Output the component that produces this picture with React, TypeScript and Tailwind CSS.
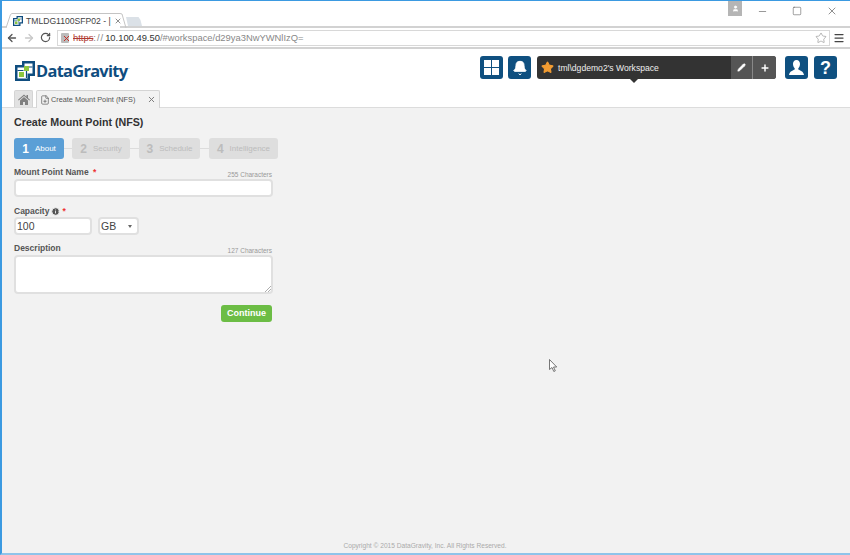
import { ArrowLeft, ArrowRight, RotateCw, Star, X, Minus, Square, Menu, Pencil, Plus, FilePlus, Info, User, Bell } from "lucide-react";

function LogoMark({ size }: { size: number }) {
  return (
    <svg width={size} height={size} viewBox="0 0 20 20" className="shrink-0">
      <path d="M0 4h7V0h13v15h-5v5H0z" fill="#0f4d7f" />
      <path d="M2.500 6.500h7v-4h8v10h-5v5h-10z" fill="#fff" />
      <rect x="9" y="5" width="5" height="5" fill="#8cc63f" />
      <rect x="4" y="11" width="5" height="5" fill="#8cc63f" />
      <path d="M2.500 9.500h6M11.500 10v7M14 6h3.500" stroke="#0f4d7f" strokeWidth="1.200" fill="none" />
    </svg>
  );
}

function HeaderButton({ children }: { children: React.ReactNode }) {
  return (
    <div className="flex h-[23px] w-[23px] items-center justify-center rounded-[3px] bg-[#0f5080] text-white">
      {children}
    </div>
  );
}

function Step({ n, label, active, width }: { n: number; label: string; active?: boolean; width: string }) {
  return (
    <div
      className={`flex h-[21px] items-center justify-center gap-[6px] rounded-[3px] ${width} ${
        active ? "bg-[#5b9fd6] text-white" : "bg-[#dedede] text-[#bcbcbc]"
      }`}
    >
      <span className="text-[12px] font-bold leading-none">{n}</span>
      <span className="text-[8px] leading-none">{label}</span>
    </div>
  );
}

const fieldBox = "rounded-[4px] border-2 border-[#e0e0e0] bg-white";

export default function App() {
  return (
    <div className="flex h-[555px] w-[850px] flex-col overflow-hidden border-t border-l-[2px] border-b-[2px] border-t-[#3b9ae1] border-l-[#3b9ae1] border-b-[#8fc4ea] bg-white font-['Liberation_Sans',sans-serif] text-[#333]">
      {/* browser title strip */}
      <div className="relative flex h-[27px] shrink-0 items-end border-b-2 border-[#d2d2d2] pl-[4px]">
        <svg width="6" height="15" viewBox="0 0 6 15" className="mb-[-2px] shrink-0">
          <path d="M0 15L5 1.500 6 1v14z" fill="#fff" />
          <path d="M0 15L4.500 1.500 6 .5" fill="none" stroke="#c4c4c4" />
        </svg>
        <div className="relative z-10 mb-[-2px] flex h-[15px] w-[108px] items-center gap-[3px] border-t border-[#c4c4c4] bg-white pl-[1px] pr-[5px]">
          <LogoMark size={10} />
          <span className="flex-1 whitespace-nowrap text-[8.6px] leading-none text-[#444]">TMLDG1100SFP02 - |</span>
          <X size={8} strokeWidth={2} className="shrink-0 text-[#555]" />
        </div>
        <svg width="24" height="15" viewBox="0 0 24 15" className="mb-[-2px] shrink-0">
          <path d="M6 4l2 9h14l-1.500-6-2-3z" fill="#dbe1e7" />
          <path d="M0 .5L2 1l4 14" fill="#fff" stroke="#c4c4c4" />
        </svg>
        <div className="ml-auto flex h-[26px] items-start self-start">
          <div className="mr-[15px] flex h-[15px] w-[14px] items-center justify-center bg-[#b5b5b5]">
            <User size={7} fill="#fff" stroke="#fff" />
          </div>
          <div className="mt-[4px] flex items-center gap-[24px] pr-[12px] text-[#444]">
            <Minus size={11} strokeWidth={1.2} />
            <Square size={10} strokeWidth={1.2} />
            <X size={12} strokeWidth={1.2} />
          </div>
        </div>
      </div>

      {/* browser toolbar */}
      <div className="flex h-[21px] shrink-0 items-center border-b-2 border-[#d2d2d2] bg-white pl-[4px] pr-[5px]">
        <ArrowLeft size={12} strokeWidth={2.6} className="text-[#555]" />
        <ArrowRight size={12} strokeWidth={2.6} className="ml-[5px] text-[#c8c8c8]" />
        <RotateCw size={11} strokeWidth={2.6} className="ml-[5px] text-[#555]" />
        <div className="ml-[6px] flex h-[16px] flex-1 items-center border border-[#d8d8d8] pl-[3px] pr-[2px] text-[9.4px] leading-none">
          <div className="relative h-[10px] w-[8px] shrink-0 rounded-[1px] bg-[#bbb]">
            <X size={9} strokeWidth={2.5} className="absolute left-[1px] top-[1px] text-[#c8281e]" />
          </div>
          <span className="ml-[4px] text-[#b03a32] line-through">https</span>
          <span className="tracking-[1px] text-[#888]">://</span>
          <span className="ml-[1px] text-[#333]">10.100.49.50</span>
          <span className="text-[#888]">/#workspace/d29ya3NwYWNlIzQ=</span>
          <Star size={12} strokeWidth={1.2} className="ml-auto text-[#888]" />
        </div>
        <Menu size={12} strokeWidth={2.5} className="ml-[3px] text-[#444]" />
      </div>

      {/* app header */}
      <div className="flex h-[59px] shrink-0 flex-col border-b border-[#dcdcdc] bg-white">
        <div className="flex items-start pl-[13px] pr-[13px] pt-[7px]">
          <div className="mt-[5px] flex items-center gap-[1px]">
            <LogoMark size={20} />
            <span className="font-['Open_Sans',sans-serif] text-[16.4px] font-bold leading-none tracking-[-0.7px] text-[#0f4d7f]">DataGravity</span>
            <span className="mt-[-8px] text-[5px] leading-none text-[#0f4d7f]">.</span>
          </div>
          <div className="ml-auto flex items-center">
            <HeaderButton>
              <div className="grid h-[15px] w-[15px] grid-cols-2 gap-[1.5px]">
                <span className="bg-white" />
                <span className="bg-white" />
                <span className="bg-white" />
                <span className="bg-white" />
              </div>
            </HeaderButton>
            <div className="ml-[5px]">
              <HeaderButton>
                <Bell size={16} fill="#fff" strokeWidth={1.5} />
              </HeaderButton>
            </div>
            <div className="relative ml-[6px] flex h-[23px] w-[239px] items-center rounded-[3px] bg-[#333] text-white">
              <Star size={13} fill="#f39c32" stroke="#f39c32" className="ml-[4px]" />
              <span className="ml-[4px] mt-[1px] flex-1 text-[8.6px] leading-none text-[#eee]">tml\dgdemo2's Workspace</span>
              <div className="flex h-full w-[22px] items-center justify-center border-r border-[#888] bg-[#555]">
                <Pencil size={9} fill="#fff" strokeWidth={1.5} />
              </div>
              <div className="flex h-full w-[23px] items-center justify-center rounded-r-[3px] bg-[#555]">
                <Plus size={10} strokeWidth={3.5} />
              </div>
              <div className="absolute left-[93px] top-[23px] h-0 w-0 border-x-[4px] border-t-[4px] border-x-transparent border-t-[#333]" />
            </div>
            <div className="ml-[9px]">
              <HeaderButton>
                <svg width="17" height="17" viewBox="0 0 17 17" fill="#fff">
                  <path d="M8.500 1C6.200 1 5 2.700 5 5c0 1.900.8 3.400 1.700 4.300v1.200C5 11.500 1.500 12.200 1 16h15c-.5-3.800-4-4.500-5.700-5.500V9.300C11.200 8.400 12 6.900 12 5c0-2.300-1.200-4-3.500-4z" />
                </svg>
              </HeaderButton>
            </div>
            <div className="ml-[6px]">
              <HeaderButton>
                <span className="text-[18px] font-bold leading-none">?</span>
              </HeaderButton>
            </div>
          </div>
        </div>
        <div className="mt-auto flex items-end gap-[3px] pl-[12px]">
          <div className="flex h-[17px] w-[19px] items-center justify-center rounded-t-[2px] border border-b-0 border-[#d4d4d4] bg-[#e2e2e2]">
            <svg width="12" height="11" viewBox="0 0 12 11" fill="#808080">
              <path d="M6 .5L0 5.700l.7.8L6 2l5.300 4.500.7-.8-2-1.700V1H8.500v1.700z" />
              <path d="M2 6.500L6 3l4 3.500V11H7V8H5v3H2z" />
            </svg>
          </div>
          <div className="mb-[-1px] flex h-[18px] w-[124px] items-center rounded-t-[2px] border border-b-0 border-[#d4d4d4] bg-[#f2f2f2] pl-[3px] pr-[3px] text-[#555]">
            <FilePlus size={10} strokeWidth={1.6} />
            <span className="ml-[1px] flex-1 text-[7.3px] leading-none">Create Mount Point (NFS)</span>
            <X size={9} strokeWidth={2.5} className="text-[#777]" />
          </div>
        </div>
      </div>

      {/* page */}
      <div className="flex flex-1 flex-col bg-[#f2f2f2] pl-[12px]">
        <div className="flex w-[260px] flex-col">
          <h1 className="mt-[8px] text-[10.7px] font-bold leading-[13px] text-[#333]">Create Mount Point (NFS)</h1>
          <div className="mt-[9px] flex w-[264px] items-center">
            <Step n={1} label="About" active width="w-[50px]" />
            <div className="h-px w-[8px] bg-[#dcdcdc]" />
            <Step n={2} label="Security" width="w-[58px]" />
            <div className="h-px w-[9px] bg-[#dcdcdc]" />
            <Step n={3} label="Schedule" width="w-[61px]" />
            <div className="h-px w-[9px] bg-[#dcdcdc]" />
            <Step n={4} label="Intelligence" width="w-[69px]" />
          </div>

          <div className="mt-[6px] flex h-[14px] items-start justify-between pr-[2px] pt-[2px]">
            <span className="text-[8.5px] font-bold leading-[10px] text-[#555]">
              Mount Point Name <span className="ml-[2px] text-[#e33]">*</span>
            </span>
            <span className="mt-[4px] text-[6.5px] leading-[8px] text-[#999]">255 Characters</span>
          </div>
          <div className={`h-[18px] w-[259px] ${fieldBox}`} />

          <div className="mt-[8px] flex h-[12px] items-center gap-[2px] text-[8.5px] font-bold leading-[10px] text-[#555]">
            Capacity
            <Info size={9} fill="#555" stroke="#f2f2f2" strokeWidth={2.5} />
            <span className="text-[#e33]">*</span>
          </div>
          <div className="flex items-center gap-[6px]">
            <div className={`flex h-[18px] w-[78px] items-center pl-[1px] text-[10.500px] leading-none text-[#444] ${fieldBox}`}>100</div>
            <div className={`flex h-[18px] w-[41px] items-center pl-[1px] pr-[5px] text-[10.500px] leading-none text-[#444] ${fieldBox}`}>
              GB
              <span className="ml-auto h-0 w-0 border-x-[2px] border-t-[3px] border-x-transparent border-t-[#666]" />
            </div>
          </div>

          <div className="mt-[6px] flex h-[14px] items-start justify-between pr-[2px] pt-[2px]">
            <span className="text-[8.5px] font-bold leading-[10px] text-[#555]">Description</span>
            <span className="mt-[4px] text-[6.5px] leading-[8px] text-[#999]">127 Characters</span>
          </div>
          <div className={`relative h-[39px] w-[259px] ${fieldBox}`}>
            <svg width="6" height="6" viewBox="0 0 6 6" className="absolute bottom-0 right-0" stroke="#999" strokeWidth="0.8">
              <path d="M0 6L6 0M3 6L6 3" />
            </svg>
          </div>

          <div className="mt-[11px] flex w-[258px] justify-end">
            <div className="flex h-[17px] w-[51px] items-center justify-center rounded-[3px] bg-[#6cbd45] text-[9px] font-bold leading-none text-white">Continue</div>
          </div>
        </div>

        <div className="mt-auto pb-[3px] pr-[14px] text-center text-[6.6px] leading-[8px] text-[#aaa]">
          Copyright © 2015 DataGravity, Inc. All Rights Reserved.
        </div>
      </div>

      {/* mouse pointer */}
      <svg width="9" height="13" viewBox="0 0 9 13" className="absolute left-[549px] top-[359px]">
        <path d="M.5.5v10l2.500-2 1.800 4 1.500-.7-1.800-3.800h3.200z" fill="#fff" stroke="#555" strokeWidth="0.8" />
      </svg>
    </div>
  );
}
